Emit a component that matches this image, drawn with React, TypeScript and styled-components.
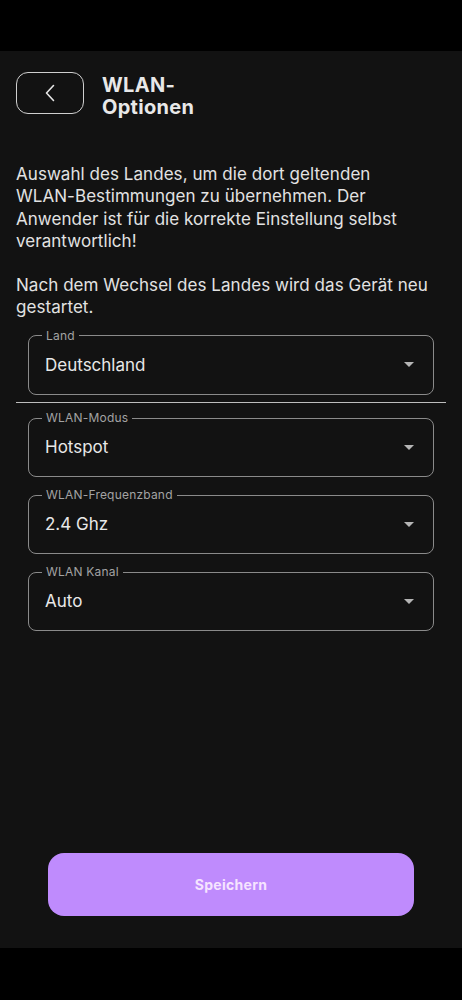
import React from 'react';
import styled, {createGlobalStyle} from "styled-components";

const GlobalStyle = createGlobalStyle`
  html, body {
    margin: 0;
    padding: 0;
    background: #000;
  }
  * {
    box-sizing: border-box;
  }
`;

type FieldType = {
    label: string
    value: string
}

const fields: FieldType[] = [
    {label: 'WLAN-Modus', value: 'Hotspot'},
    {label: 'WLAN-Frequenzband', value: '2.4 Ghz'},
    {label: 'WLAN Kanal', value: 'Auto'},
];

const SelectField = ({label, value}: FieldType) => (
    <Fieldset>
        <Legend>{label}</Legend>
        <SelectRow>
            <Value>{value}</Value>
            <Caret/>
        </SelectRow>
    </Fieldset>
);

export default function App() {
    return (
        <Screen>
            <GlobalStyle/>
            <Content>
                <Header>
                    <BackButton aria-label="Zurück">
                        <svg width="10" height="18" viewBox="0 0 10 18" fill="none">
                            <polyline points="8.5,1.5 1.5,9 8.5,16.5" stroke="#e6e6e6" strokeWidth="1.6"
                                      strokeLinecap="round" strokeLinejoin="round"/>
                        </svg>
                    </BackButton>
                    <Title>WLAN-<br/>Optionen</Title>
                </Header>
                <Text>
                    Auswahl des Landes, um die dort geltenden <NoWrap>WLAN-Bestimmungen</NoWrap> zu übernehmen.
                    Der Anwender ist für die korrekte Einstellung selbst verantwortlich!
                </Text>
                <Text>
                    Nach dem Wechsel des Landes wird das Gerät neu gestartet.
                </Text>
                <Fields>
                    <SelectField label="Land" value="Deutschland"/>
                    <Divider/>
                    {fields.map(f => (
                        <SelectField key={f.label} label={f.label} value={f.value}/>
                    ))}
                </Fields>
                <SaveButton>Speichern</SaveButton>
            </Content>
        </Screen>
    );
}

const Screen = styled.div`
  width: 462px;
  height: 1000px;
  padding: 51px 0 52px;
  background: #000;
  font-family: Inter, "Noto Sans", sans-serif;
`;
const Content = styled.div`
  height: 100%;
  background: #121212;
  display: flex;
  flex-direction: column;
  padding: 21px 16px 32px;
`;
const Header = styled.div`
  display: flex;
  align-items: flex-start;
  gap: 18px;
  margin-bottom: 45px;
`;
const BackButton = styled.button`
  width: 68px;
  height: 42px;
  border: 1.5px solid #cfcfcf;
  border-radius: 12px;
  background: transparent;
  display: flex;
  align-items: center;
  justify-content: center;
  padding: 0;
  cursor: pointer;
`;
const Title = styled.h1`
  margin: 2px 0 0;
  color: #e8e8e8;
  font-size: 20px;
  line-height: 22px;
  font-weight: 700;
  letter-spacing: 0.3px;
`;
const Text = styled.p`
  margin: 0 0 22px;
  color: #e2e2e2;
  font-size: 17px;
  line-height: 22.3px;
  letter-spacing: 0.05px;

  &:last-of-type {
    margin-bottom: 10px;
  }
`;
const NoWrap = styled.span`
  white-space: nowrap;
`;
const Fields = styled.div`
  display: flex;
  flex-direction: column;
  gap: 11px;
`;
const Fieldset = styled.fieldset`
  margin: 0 12px;
  padding: 0 12px 7px 16px;
  border: 1px solid #8a8a8a;
  border-radius: 8px;
  min-width: 0;
`;
const Legend = styled.legend`
  padding: 0 4px;
  margin-left: -3px;
  font-size: 12px;
  line-height: 14px;
  letter-spacing: 0.2px;
  color: #a3a3a3;
`;
const SelectRow = styled.div`
  height: 44px;
  display: flex;
  align-items: center;
  justify-content: space-between;
`;
const Value = styled.span`
  color: #e8e8e8;
  font-size: 17px;
`;
const Caret = styled.span`
  width: 0;
  height: 0;
  margin-right: 7px;
  border-left: 5px solid transparent;
  border-right: 5px solid transparent;
  border-top: 5px solid #b5b5b5;
`;
const Divider = styled.hr`
  margin: -4px 0 -3px;
  border: none;
  height: 1.5px;
  background: #bdbdbd;
`;
const SaveButton = styled.button`
  margin: auto 32px 0;
  height: 63px;
  border: none;
  border-radius: 16px;
  background: #bf8bfd;
  color: #f6e4ff;
  font-family: inherit;
  font-size: 14px;
  font-weight: 700;
  letter-spacing: 0.3px;
  cursor: pointer;
`;
